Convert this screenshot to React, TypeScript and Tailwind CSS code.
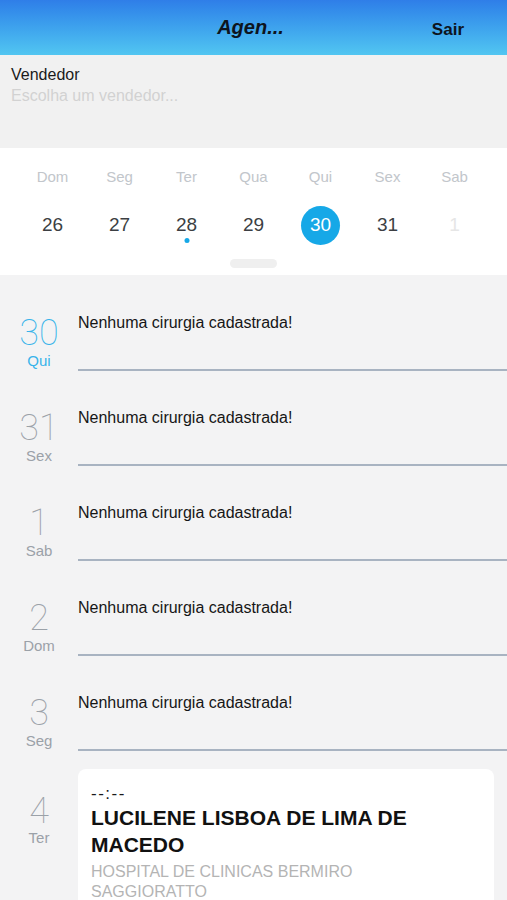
import { Fragment } from 'react';

const WEEK = [
  { label: 'Dom', day: 26 },
  { label: 'Seg', day: 27 },
  { label: 'Ter', day: 28, dot: true },
  { label: 'Qua', day: 29 },
  { label: 'Qui', day: 30, selected: true },
  { label: 'Sex', day: 31 },
  { label: 'Sab', day: 1, muted: true },
];

const EMPTY_DAYS = [
  { day: 30, label: 'Qui', today: true },
  { day: 31, label: 'Sex' },
  { day: 1, label: 'Sab' },
  { day: 2, label: 'Dom' },
  { day: 3, label: 'Seg' },
];

const SANS = "font-['Liberation_Sans',Arial,sans-serif]";

export default function App() {
  return (
    <div className={`w-[507px] h-[900px] overflow-hidden bg-[#f3f3f4] ${SANS}`}>
      {/* header */}
      <div className="relative h-[55px] bg-gradient-to-b from-[#2f7ee8] to-[#52c6f1] flex items-center justify-center">
        <span className="text-[20px] font-bold italic text-[#0d1420] -ml-[6px] -mt-[1px]">Agen...</span>
        <span className="absolute right-[43px] top-[17px] text-[17px] font-bold text-[#0d1420]">Sair</span>
      </div>

      {/* vendedor */}
      <div className="h-[93px] bg-[#f1f1f1] px-[11px] pt-[10px]">
        <div className="text-[16px] leading-[20px] text-[#1a1a1a]">Vendedor</div>
        <div className="text-[16px] leading-[22px] text-[#d2d2d2]">Escolha um vendedor...</div>
      </div>

      {/* week strip */}
      <div className="h-[127px] bg-white px-[19px] pt-[19px]">
        <div className="grid grid-cols-7">
          {WEEK.map((d) => (
            <div key={d.label} className="flex flex-col items-center">
              <span className="text-[15px] leading-[20px] text-[#c2c6cb]">{d.label}</span>
              <div className="relative mt-[18px] h-[40px] w-[40px] flex items-center justify-center">
                {d.selected ? (
                  <span className="h-[39px] w-[39px] rounded-full bg-[#16a8e7] flex items-center justify-center text-[19px] text-white">
                    {d.day}
                  </span>
                ) : (
                  <span className={`text-[19px] ${d.muted ? 'text-[#e6e6e6]' : 'text-[#3c3f43]'}`}>{d.day}</span>
                )}
                {d.dot && <span className="absolute bottom-[2px] left-1/2 -translate-x-1/2 h-[5px] w-[5px] rounded-full bg-[#16a8e7]" />}
              </div>
            </div>
          ))}
        </div>
        <div className="mx-auto mt-[14px] h-[9px] w-[47px] rounded-full bg-[#efefef]" />
      </div>

      {/* agenda */}
      <div className="pt-[38px]">
        {EMPTY_DAYS.map((d) => (
          <Fragment key={d.day}>
            <div className="flex h-[95px]">
              <div className="w-[78px] flex flex-col items-center pt-[3px]">
                <span
                  className={`font-['Roboto',sans-serif] font-thin text-[36px] leading-[34px] ${d.today ? 'text-[#38b3ea]' : 'text-[#9ba1a8]'}`}
                >
                  {d.day}
                </span>
                <span className={`mt-[2px] text-[15px] leading-[18px] ${d.today ? 'text-[#38b3ea]' : 'text-[#9ba1a8]'}`}>{d.label}</span>
              </div>
              <div className="flex-1">
                <div className="text-[16px] leading-[20px] text-[#161616]">Nenhuma cirurgia cadastrada!</div>
                <div className="mt-[36px] h-[2px] bg-[#a8b3c1]" />
              </div>
            </div>
          </Fragment>
        ))}

        <div className="flex mt-[-19px]">
          <div className="w-[78px] flex flex-col items-center pt-[25px]">
            <span className="font-['Roboto',sans-serif] font-thin text-[36px] leading-[34px] text-[#9ba1a8]">4</span>
            <span className="mt-[1px] text-[15px] leading-[18px] text-[#9ba1a8]">Ter</span>
          </div>
          <div className="flex-1 mr-[13px] rounded-t-[8px] bg-white pl-[13px] pr-[40px] pt-[15px] pb-[10px]">
            <div className="text-[17px] leading-[20px] tracking-[1.5px] text-[#1a1a1a]">--:--</div>
            <div className="text-[21px] leading-[27px] font-bold text-[#111]">LUCILENE LISBOA DE LIMA DE MACEDO</div>
            <div className="mt-[4px] text-[16px] leading-[20px] text-[#b4b4b4]">HOSPITAL DE CLINICAS BERMIRO SAGGIORATTO</div>
          </div>
        </div>
      </div>
    </div>
  );
}
